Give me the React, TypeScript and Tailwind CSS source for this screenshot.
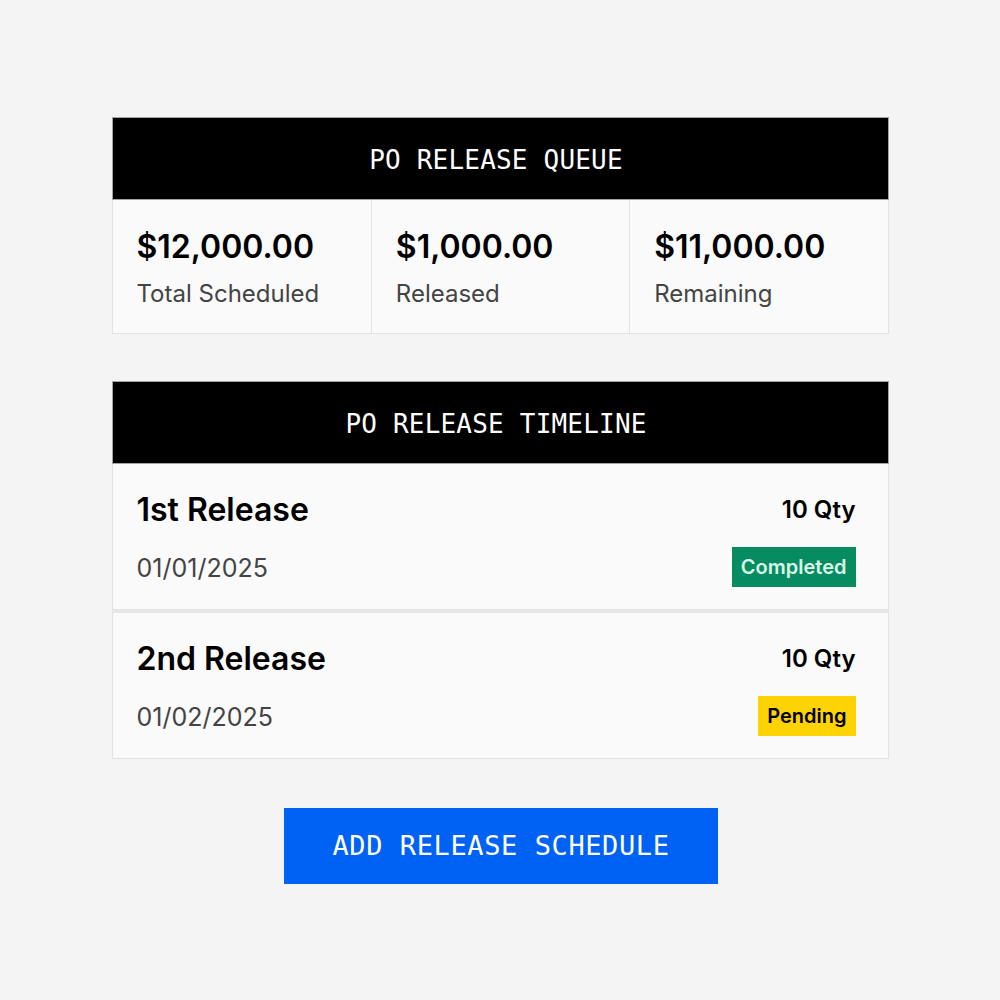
import React from 'react';

const mono = { fontFamily: '"DejaVu Sans Mono", "Liberation Mono", monospace' };

const stats = [
  { amount: '$12,000.00', label: 'Total Scheduled' },
  { amount: '$1,000.00', label: 'Released' },
  { amount: '$11,000.00', label: 'Remaining' },
];

const releases = [
  { title: '1st Release', date: '01/01/2025', qty: '10 Qty', status: 'Completed' },
  { title: '2nd Release', date: '01/02/2025', qty: '10 Qty', status: 'Pending' },
];

function Header({ title }: { title: string }) {
  return (
    <div
      className="h-[83px] bg-black border border-[#a3a3a3] flex items-center justify-center pt-[3px] pr-[8px] text-white text-[26px] tracking-[0.2px]"
      style={mono}
    >
      {title}
    </div>
  );
}

export default function App() {
  return (
    <div
      className="min-h-[1000px] w-[1000px] bg-[#f4f4f4] pt-[117px] flex flex-col items-center"
      style={{ fontFamily: 'Inter, "Noto Sans", sans-serif' }}
    >
      <div className="w-[777px]">
        <Header title="PO RELEASE QUEUE" />
        <div className="grid grid-cols-3 bg-[#fafafa] border border-t-0 border-[#e2e2e2] h-[134px]">
          {stats.map((s, i) => (
            <div
              key={s.label}
              className={'px-6 pt-[27px] ' + (i > 0 ? 'border-l border-[#e2e2e2]' : '')}
            >
              <div className="text-[32px] font-semibold text-black leading-[40px]">{s.amount}</div>
              <div className="text-[24px] text-[#444] mt-[12px] leading-[30px]">{s.label}</div>
            </div>
          ))}
        </div>
      </div>

      <div className="w-[777px] mt-[47px]">
        <Header title="PO RELEASE TIMELINE" />
        <div className="flex flex-col gap-[3px] bg-[#e6e6e6]">
          {releases.map((r) => (
            <div
              key={r.title}
              className="bg-[#fafafa] border border-t-0 border-[#e2e2e2] h-[146px] px-6 pt-[26px] flex justify-between"
            >
              <div className="flex flex-col">
                <div className="text-[32px] font-semibold text-black leading-[40px]">{r.title}</div>
                <div className="text-[25px] text-[#444] mt-[23px] leading-[30px]">{r.date}</div>
              </div>
              <div className="flex flex-col items-end pr-[8px]">
                <div className="text-[24px] font-semibold text-black leading-[40px]">{r.qty}</div>
                <div
                  className={
                    'mt-[17px] h-[40px] px-[9px] flex items-center text-[20px] font-semibold ' +
                    (r.status === 'Completed' ? 'bg-[#078c61] text-[#d9f7ea]' : 'bg-[#fdd303] text-black')
                  }
                >
                  {r.status}
                </div>
              </div>
            </div>
          ))}
        </div>
      </div>

      <button
        className="mt-[49px] ml-[2px] w-[434px] h-[76px] bg-[#0062f5] text-white text-[27px] tracking-[0.6px]"
        style={mono}
      >
        ADD RELEASE SCHEDULE
      </button>
    </div>
  );
}
